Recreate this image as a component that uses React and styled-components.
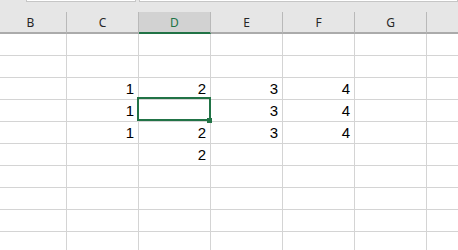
import React from "react";
import styled, { createGlobalStyle } from "styled-components";

const columns = ["B", "C", "D", "E", "F", "G", "H"];
const activeColumn = "D";

// each row lists the values for columns B..H
const rows = [
    [],
    [],
    ["", 1, 2, 3, 4],
    ["", 1, "", 3, 4],
    ["", 1, 2, 3, 4],
    ["", "", 2],
    [],
    [],
    [],
    [],
];

const selected = { row: 3, col: 2 };

const App = () => {
    return (
        <>
            <GlobalStyle />
            <Sheet>
                <FormulaStrip>
                    <NameBox />
                    <FormulaBox />
                </FormulaStrip>
                <Grid>
                    {columns.map((c) => (
                        <HeaderCell key={c} $active={c === activeColumn}>
                            {c === "H" ? "" : c}
                        </HeaderCell>
                    ))}
                    {rows.map((row, r) =>
                        columns.map((c, ci) => {
                            const isSel = r === selected.row && ci === selected.col;
                            return (
                                <Cell key={r + c} $selected={isSel}>
                                    {row[ci] === undefined ? "" : row[ci]}
                                    {isSel && (
                                        <Selection>
                                            <FillHandle />
                                        </Selection>
                                    )}
                                </Cell>
                            );
                        })
                    )}
                </Grid>
            </Sheet>
        </>
    );
};

const GlobalStyle = createGlobalStyle`
    html, body {
        margin: 0;
        padding: 0;
        background: #ffffff;
        overflow: hidden;
    }
`;

const Sheet = styled.div`
    width: 458px;
    height: 250px;
    overflow: hidden;
    background: #ffffff;
`;

const FormulaStrip = styled.div`
    height: 12px;
    background: #e6e6e6;
    display: flex;
    align-items: flex-start;
    gap: 3px;
    padding-left: 26px;
    box-sizing: border-box;
`;

const NameBox = styled.div`
    width: 110px;
    height: 2px;
    box-sizing: border-box;
    background: #ffffff;
    border: 1px solid #c6c6c6;
    border-top: none;
`;

const FormulaBox = styled(NameBox)`
    width: auto;
    flex: 1;
`;

const Grid = styled.div`
    display: grid;
    grid-template-columns: repeat(7, 72px);
    margin-left: -5px;
`;

const HeaderCell = styled.div`
    height: 22px;
    box-sizing: border-box;
    background: ${(p) => (p.$active ? "#d2d2d2" : "#e6e6e6")};
    border-right: 1px solid #b9b9b9;
    border-bottom: 2px solid ${(p) => (p.$active ? "#217346" : "#ababab")};
    display: flex;
    align-items: center;
    justify-content: center;
    font-family: "Noto Sans", "Open Sans", sans-serif;
    font-size: 12px;
    color: ${(p) => (p.$active ? "#217346" : "#262626")};
`;

const Cell = styled.div`
    position: relative;
    z-index: ${(p) => (p.$selected ? 2 : "auto")};
    height: 22px;
    box-sizing: border-box;
    border-right: 1px solid #d4d4d4;
    border-bottom: 1px solid #d4d4d4;
    padding-right: 4px;
    text-align: right;
    font-family: "Liberation Sans", Arial, sans-serif;
    font-size: 15px;
    line-height: 21px;
    color: #000000;
`;

const Selection = styled.div`
    position: absolute;
    left: -2px;
    top: -3px;
    width: 74px;
    height: 24px;
    box-sizing: border-box;
    border: 2px solid #217346;
    pointer-events: none;
`;

const FillHandle = styled.div`
    position: absolute;
    right: -3px;
    bottom: -4px;
    width: 5px;
    height: 5px;
    background: #217346;
`;

export default App;
